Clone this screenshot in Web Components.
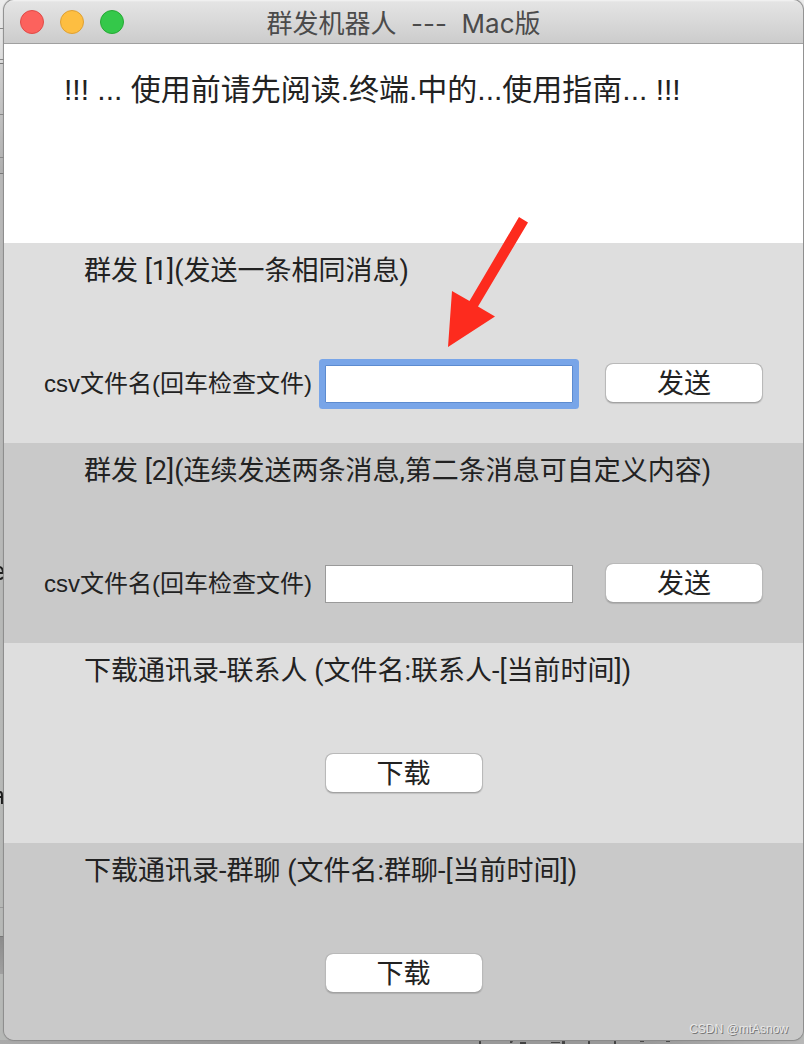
<!DOCTYPE html>
<html lang="zh-CN">
<head>
<meta charset="utf-8">
<meta name="viewport" content="width=device-width, initial-scale=1">
<title>群发机器人 --- Mac版</title>
<style>
  html, body { margin: 0; min-height: 100%; background: #bcbdbc; }
  body { font-family: Inter, "Noto Sans CJK SC", sans-serif; color: #222; }
</style>
</head>
<body>
<desk-top>
  <app-window heading="群发机器人  ---  Mac版">
    <notice-banner>!!! ... 使用前请先阅读.终端.中的...使用指南... !!!</notice-banner>
    <tool-panel heading="群发 [1](发送一条相同消息)">
      <send-form autofocus-field></send-form>
      <pointer-arrow slot="overlay"></pointer-arrow>
    </tool-panel>
    <tool-panel shade heading="群发 [2](连续发送两条消息,第二条消息可自定义内容)">
      <send-form></send-form>
    </tool-panel>
    <tool-panel heading="下载通讯录-联系人 (文件名:联系人-[当前时间])">
      <download-action></download-action>
    </tool-panel>
    <tool-panel shade heading="下载通讯录-群聊 (文件名:群聊-[当前时间])">
      <download-action></download-action>
    </tool-panel>
    <span slot="credit">CSDN @mtAsnow</span>
  </app-window>
</desk-top>
<script>
class BaseElement extends HTMLElement {
  constructor() {
    super();
    this.attachShadow({ mode: "open" }).innerHTML = this.template();
  }
}

customElements.define("desk-top", class extends BaseElement {
  template() {
    return `<style>
      :host { display: block; position: relative; box-sizing: border-box; min-height: 100vh; padding: 0 1px 4px 4px; overflow: hidden;
        background:
          linear-gradient(#888, #888) 0 28px / 4px 1px no-repeat,
          linear-gradient(#888, #888) 0 59px / 4px 1px no-repeat,
          linear-gradient(#777, #777) 0 63px / 4px 1px no-repeat,
          linear-gradient(#888, #888) 0 114px / 4px 1px no-repeat,
          linear-gradient(#888, #888) 0 157px / 4px 1px no-repeat,
          linear-gradient(#777, #777) 0 173px / 4px 1px no-repeat,
          linear-gradient(#999, #999) 0 907px / 4px 1px no-repeat,
          linear-gradient(#777, #777) 0 936px / 4px 1px no-repeat,
          linear-gradient(#8c8c8c, #a0a0a0) 0 937px / 4px 37px no-repeat,
          linear-gradient(90deg, #aaa, #999 30%, #999 80%, #b8b8b8) 0 100% / 100% 4px no-repeat,
          linear-gradient(#ececec 0, #dcdcdc 62px, #d0d0d0 64px, #b0b0b0 172px, #b8b8b8 174px, #b6b8b6 100%); }
      svg { position: absolute; left: 0; }
      .side { top: 0; }
      .foot { top: 1041px; left: 470px; }
    </style>
    <svg class="side" width="4" height="820" fill="none" stroke="#1c1c1c" stroke-width="2" aria-hidden="true">
      <path d="M0 567Q3 568 3 573H0M0 579Q2 579 3 577M0 792Q2 792 2 795V804M0 797H2"/>
    </svg>
    <svg class="foot" width="210" height="3" fill="#444" aria-hidden="true">
      <path d="M9 0h2v3H9zM40 0h3l-1 2h-2zM50 1h6v2h-6zM81 1h9v1h-9zM92 0h3v3h-3zM118 0h2v3h-2zM144 0h2v3h-2zM170 0h4v1h-4zM196 0h4v1h-4z"/>
    </svg>
    <slot></slot>`;
  }
});

customElements.define("app-window", class extends BaseElement {
  template() {
    return `<style>
      :host { display: block; position: relative; border-radius: 10px; background: #c9c9c9;
        box-shadow: 0 0 1px 1px #8a8a8a; }
      header { display: grid; grid-template-columns: 1fr auto 1fr; align-items: center; box-sizing: border-box; height: 44px; padding: 0 16px;
        border-radius: 10px 10px 0 0; border-bottom: 1px solid #a0a0a0; background: linear-gradient(#f4f4f4 0, #e4e4e4 2px, #cccccc); }
      .lights { display: flex; gap: 16px; }
      button { width: 24px; height: 24px; padding: 0; border: 1px solid; border-radius: 50%; }
      .close { background: #fc625d; border-color: #e04b47; }
      .min { background: #fdbe41; border-color: #dea034; }
      .zoom { background: #34c84a; border-color: #26a934; }
      h1 { margin: 0; padding-top: 4px; font-size: 26px; line-height: 36px; font-weight: 400; color: #4b4b4b; white-space: pre; }
      main { display: block; border-radius: 0 0 10px 10px; overflow: hidden; }
      .credit { position: absolute; right: 15px; bottom: 3px; font: 12px/16px "Liberation Sans", sans-serif; color: #e8e8e8; text-shadow: 1px 1px 0 #777; }
    </style>
    <header>
      <div class="lights">
        <button class="close" aria-label="关闭"></button>
        <button class="min" aria-label="最小化"></button>
        <button class="zoom" aria-label="缩放"></button>
      </div>
      <h1></h1>
    </header>
    <main><slot></slot></main>
    <div class="credit"><slot name="credit"></slot></div>`;
  }
  connectedCallback() { this.shadowRoot.querySelector("h1").textContent = this.getAttribute("heading"); }
});

customElements.define("notice-banner", class extends BaseElement {
  template() {
    return `<style>
      :host { display: block; background: #fff; padding: 26px 60px 133px; }
      p { margin: 0; font: 30px/40px "Liberation Sans", "Noto Sans CJK SC", sans-serif; }
    </style><p><slot></slot></p>`;
  }
});

customElements.define("tool-panel", class extends BaseElement {
  template() {
    return `<style>
      :host { display: flex; flex-direction: column; position: relative; box-sizing: border-box; padding: 8px 40px 0; min-height: 200px; background: #dedede; }
      :host([shade]) { background: #c9c9c9; }
      :host(:last-of-type) { min-height: 197px; }
      h2 { margin: 0 0 0 40px; font: 400 27px/40px Roboto, "Noto Sans CJK SC", sans-serif; }
    </style><h2></h2><slot></slot><slot name="overlay"></slot>`;
  }
  connectedCallback() { this.shadowRoot.querySelector("h2").textContent = this.getAttribute("heading"); }
});

const buttonStyle = `
  button { box-sizing: border-box; height: 40px; width: 158px; padding: 2px 0 0; border: 1px solid #b9b9b9; border-bottom-color: #a2a2a2;
    border-radius: 8px; background: #fff; background-clip: padding-box; color: #222; font: inherit; font-size: 27px; line-height: 36px; box-shadow: 0 1px 1px #0002; }`;

customElements.define("send-form", class extends BaseElement {
  template() {
    return `<style>
      :host { display: block; margin-top: 72px; }
      form { display: grid; grid-template-columns: 273px minmax(0, 1fr) 158px; align-items: center; }
      label { padding-top: 2px; font: 24px/38px "Liberation Sans", "Noto Sans CJK SC", sans-serif; white-space: nowrap; }
      input { box-sizing: border-box; height: 38px; width: auto; min-width: 0; margin: 2px 32px 0 8px; padding: 0 6px; border: 1px solid #9a9a9a;
        border-radius: 0; background: #fff; font: inherit; font-size: 24px; outline: 0; }
      :host([autofocus-field]) input { border: 1px solid #5c8bd0; box-shadow: 0 0 0 6px #78a5e8; border-radius: 1px; }
      ${buttonStyle}
    </style>
    <form><label for="file">csv文件名(回车检查文件)</label><input id="file" type="text"><button type="button">发送</button></form>`;
  }
});

customElements.define("download-action", class extends BaseElement {
  template() {
    return `<style>
      :host { display: flex; justify-content: center; margin-top: 62px; }
      ${buttonStyle}
    </style><button type="button">下载</button>`;
  }
});

customElements.define("pointer-arrow", class extends BaseElement {
  template() {
    return `<style>
      :host { position: absolute; left: 444px; top: -27px; z-index: 1; pointer-events: none; }
      svg { display: block; }
    </style>
    <svg width="80" height="132" viewBox="448 216 80 132" aria-hidden="true">
      <path fill="#fd2b1e" d="M519 217L528 222.500L478 306.500L495 316.500L448 347L452 291L469.500 301Z"/>
    </svg>`;
  }
});
</script>
</body>
</html>
